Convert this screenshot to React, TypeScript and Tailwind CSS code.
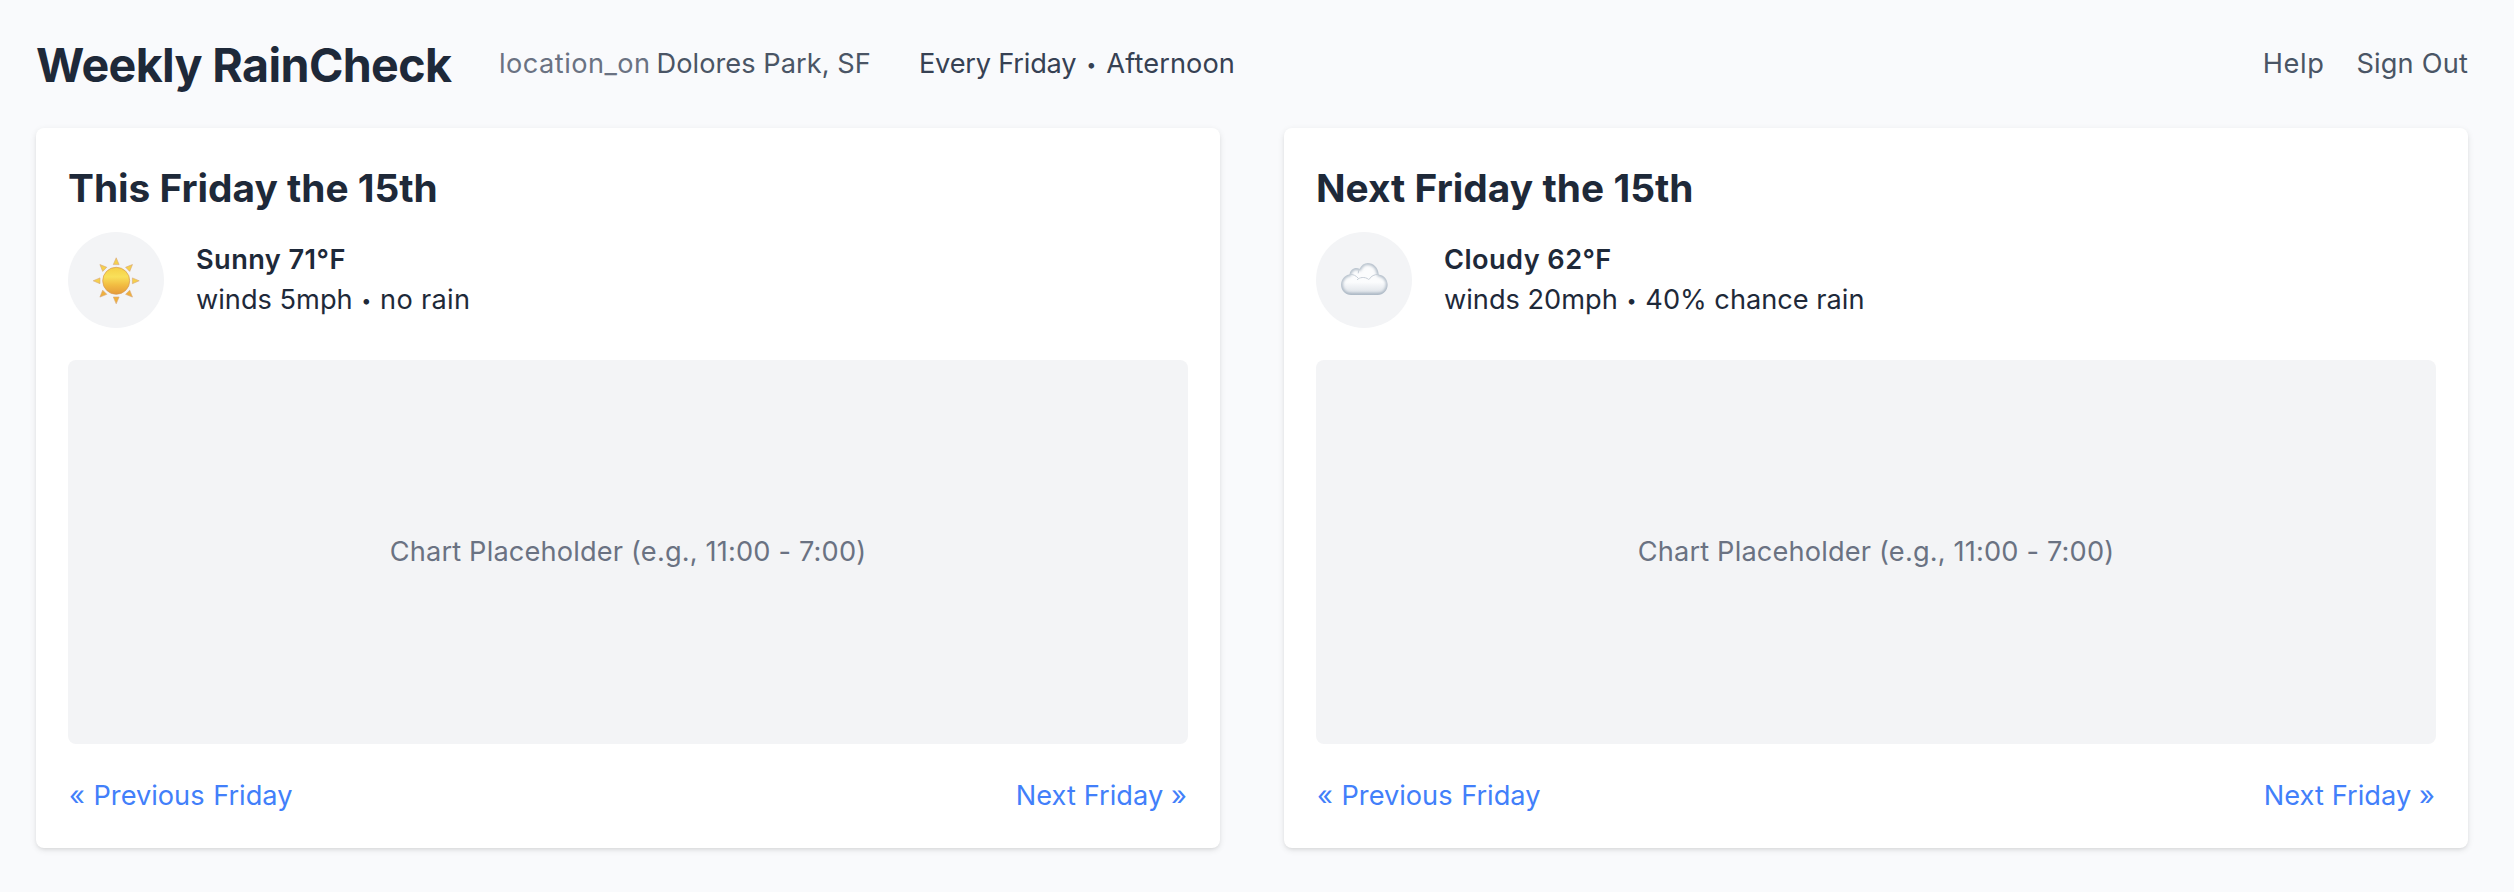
import type { ReactNode } from "react";

const RAY_ANGLES = [0, 45, 90, 135, 180, 225, 270, 315];

function SunIcon() {
  return (
    <svg viewBox="0 0 96 96" className="size-24" aria-hidden="true">
      <defs>
        <linearGradient id="sunDisc" x1="0" y1="0" x2="0" y2="1">
          <stop offset="0" stopColor="#f5cf45" />
          <stop offset="0.35" stopColor="#f9e05a" />
          <stop offset="0.65" stopColor="#f2bd42" />
          <stop offset="1" stopColor="#e59a3a" />
        </linearGradient>
      </defs>
      {RAY_ANGLES.map((angle) => (
        <path
          key={angle}
          d="M48.2 25.8L51.1 32.6H45.3Z"
          transform={`rotate(${angle} 48.2 48.8)`}
          fill={angle > 90 && angle < 270 ? "#efb03c" : "#f5d04c"}
          stroke="#d9a878"
          strokeWidth="0.6"
          strokeLinejoin="round"
        />
      ))}
      <circle cx="48.2" cy="48.8" r="13.5" fill="url(#sunDisc)" stroke="#d99a50" strokeWidth="0.7" />
    </svg>
  );
}

const CLOUD_OUTLINE =
  "M35.2 63C29.4 63 25 58.4 25 52.8C25 47.2 29 42.9 33.6 42.4C33.8 38.6 37 36 40.3 36C41.6 36 42.6 36.3 43.5 36.9C45.3 33.3 48.2 31 51.7 31C57.4 31 62.4 35.6 62.7 42.4C67.8 43 71.7 47.3 71.7 52.8C71.7 58.4 67.3 63 61.6 63Z";

function CloudIcon() {
  return (
    <svg viewBox="0 0 96 96" className="size-24" aria-hidden="true">
      <defs>
        <clipPath id="cloudClip">
          <path d={CLOUD_OUTLINE} />
        </clipPath>
        <linearGradient id="cloudFill" gradientUnits="userSpaceOnUse" x1="0" y1="31" x2="0" y2="63">
          <stop offset="0" stopColor="#fbfcfd" />
          <stop offset="0.6" stopColor="#fbfcfd" />
          <stop offset="0.88" stopColor="#e3e7ec" />
          <stop offset="1" stopColor="#c3ccd6" />
        </linearGradient>
        <filter id="cloudSoft" x="-20%" y="-20%" width="140%" height="140%">
          <feGaussianBlur stdDeviation="1.6" />
        </filter>
        <filter id="cloudFoldSoft" x="-20%" y="-20%" width="140%" height="140%">
          <feGaussianBlur stdDeviation="0.4" />
        </filter>
      </defs>
      <g clipPath="url(#cloudClip)">
        <path d={CLOUD_OUTLINE} fill="url(#cloudFill)" />
        <path d={CLOUD_OUTLINE} fill="none" stroke="#a3b0be" strokeWidth="3" filter="url(#cloudSoft)" />
        <g fill="none" stroke="#c6ced7" strokeWidth="1" strokeLinecap="round" filter="url(#cloudFoldSoft)">
          <path d="M33.6 42.4C37 42.2 40 43.4 42 46" />
          <path d="M43.5 36.9C42.7 38.2 42.3 39.6 42.2 41" />
          <path d="M62.7 42.4C58.4 42.2 55 44 53.2 47.2" />
          <path d="M41.3 47.6C43.2 45.4 48.6 44.2 52.4 47.2" />
        </g>
      </g>
    </svg>
  );
}

function Bullet({ className }: { className: string }) {
  return (
    <span className={`inline-block text-center text-[18px] leading-none align-[2px] ${className}`}>•</span>
  );
}

interface ForecastCardProps {
  title: string;
  titleClass: string;
  icon: ReactNode;
  summary: string;
  wind: string;
  rain: string;
  rainClass: string;
}

function ForecastCard({ title, titleClass, icon, summary, wind, rain, rainClass }: ForecastCardProps) {
  return (
    <section className="rounded-lg bg-white p-8 shadow-[0_2px_6px_rgba(0,0,0,0.1),0_2px_4px_-2px_rgba(0,0,0,0.1)]">
      <h2 className={`mb-4 text-[38.8px] leading-[56px] font-bold ${titleClass}`}>{title}</h2>
      <div className="mb-8 flex items-center gap-8">
        <div className="size-24 shrink-0 overflow-hidden rounded-full bg-[#f3f4f6]">{icon}</div>
        <div className="whitespace-nowrap">
          <p className="font-semibold tracking-[0.42px]">{summary}</p>
          <p>
            <span>{wind}</span>
            <Bullet className="w-[27.5px]" />
            <span className={rainClass}>{rain}</span>
          </p>
        </div>
      </div>
      <div className="mb-8 flex h-96 items-center justify-center rounded-lg bg-[#f3f4f6] tracking-[0.17px] text-[#6a7282]">
        Chart Placeholder (e.g., 11:00 - 7:00)
      </div>
      <div className="flex justify-between text-[#427ffa]">
        <a href="#previous" className="ml-px [word-spacing:1px]">« Previous Friday</a>
        <a href="#next" className="mr-px tracking-[0.07px]">Next Friday »</a>
      </div>
    </section>
  );
}

export default function App() {
  return (
    <div className="min-h-screen bg-[#f9fafc] font-['Inter','Liberation_Sans',sans-serif] text-[27.2px] leading-[40px] text-[#1e2939]">
      <header className="flex h-32 items-center justify-between pr-[46px] pl-9 whitespace-nowrap">
        <div className="flex items-center gap-12">
          <h1 className="w-[415px] pt-0.5 text-[46.6px] leading-[64px] font-bold tracking-[-0.63px]">
            Weekly RainCheck
          </h1>
          <div className="flex text-[#4a5565]">
            <span className="w-[157.5px] tracking-[0.46px] text-[#6a7282]">location_on</span>
            <span className="tracking-[0.05px]">Dolores Park, SF</span>
          </div>
          <div className="text-[#364153]">
            <span className="tracking-[-0.2px]">Every Friday</span>
            <Bullet className="w-[30px]" />
            <span className="tracking-[0.1px]">Afternoon</span>
          </div>
        </div>
        <nav className="flex gap-8 text-[#4a5565]">
          <a href="#help" className="tracking-[0.6px]">Help</a>
          <a href="#sign-out" className="tracking-[0.18px]">Sign Out</a>
        </nav>
      </header>
      <main className="grid grid-cols-2 gap-16 pr-[46px] pl-9">
        <ForecastCard
          title="This Friday the 15th"
          titleClass="tracking-normal"
          icon={<SunIcon />}
          summary="Sunny 71°F"
          wind="winds 5mph"
          rain="no rain"
          rainClass="tracking-[0.3px]"
        />
        <ForecastCard
          title="Next Friday the 15th"
          titleClass="tracking-[0.05px]"
          icon={<CloudIcon />}
          summary="Cloudy 62°F"
          wind="winds 20mph"
          rain="40% chance rain"
          rainClass="tracking-normal"
        />
      </main>
    </div>
  );
}
